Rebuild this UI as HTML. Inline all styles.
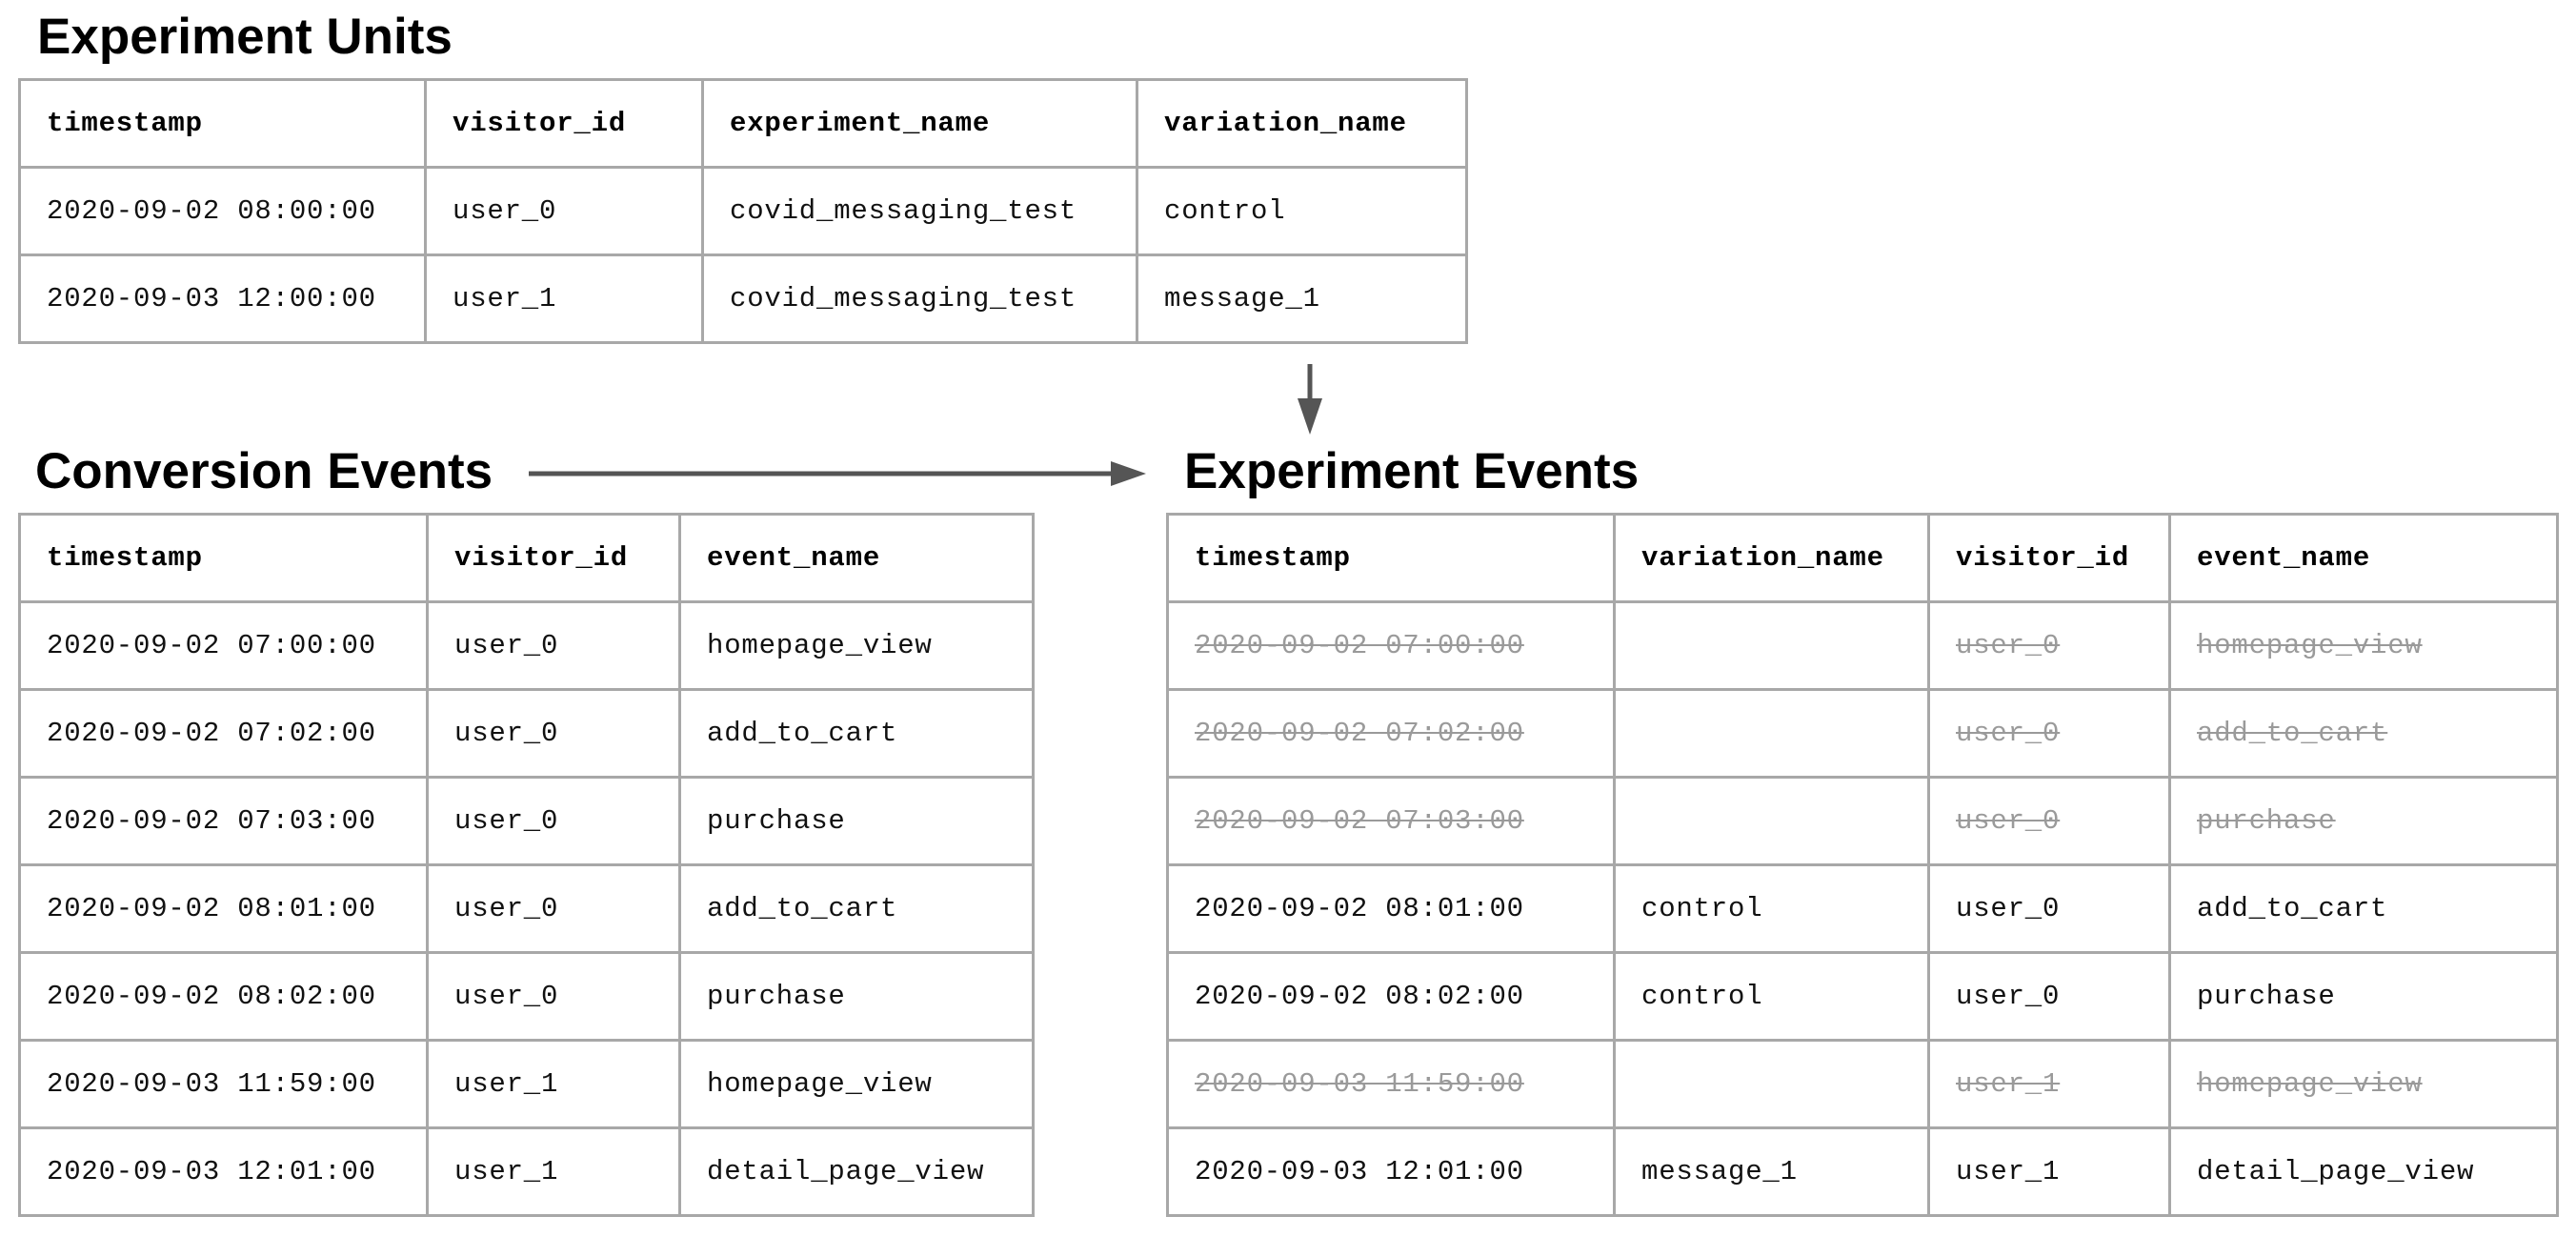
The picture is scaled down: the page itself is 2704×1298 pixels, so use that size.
<!DOCTYPE html>
<html><head><meta charset="utf-8"><style>
body{margin:0;width:2704px;height:1298px;background:#fff;position:relative;overflow:hidden}
.t{position:absolute;font-family:"Liberation Sans",Arial,sans-serif;font-weight:bold;font-size:53px;line-height:53px;color:#000;white-space:nowrap}
table{position:absolute;border-collapse:collapse;table-layout:fixed;font-family:"Liberation Mono",monospace;font-size:29px;letter-spacing:0.8px;color:#111}
td{border:3px solid #a8a8a8;padding:0 0 0 27px;height:89px;white-space:nowrap;overflow:hidden}
th{border:3px solid #a8a8a8;padding:0 0 0 27px;height:89px;text-align:left;font-weight:bold;color:#000}
td.s{color:#9a9a9a;text-decoration:line-through}
</style></head><body>
<div class="t" style="left:39px;top:12px">Experiment Units</div>
<div class="t" style="left:37px;top:468px">Conversion Events</div>
<div class="t" style="left:1243px;top:468px">Experiment Events</div>

<svg style="position:absolute;left:0;top:0" width="2704" height="1298">
<line x1="1375" y1="382" x2="1375" y2="425" stroke="#555" stroke-width="5"/>
<polygon points="1362,418 1388,418 1375,456" fill="#555"/>
<line x1="555" y1="497" x2="1175" y2="497" stroke="#555" stroke-width="5"/>
<polygon points="1166,484 1166,510 1203,497" fill="#555"/>
</svg>

<table style="left:19px;top:82px;width:1519px">
<col style="width:426px"><col style="width:291px"><col style="width:456px"><col style="width:346px">
<tr><th>timestamp</th><th>visitor_id</th><th>experiment_name</th><th>variation_name</th></tr>
<tr><td>2020-09-02 08:00:00</td><td>user_0</td><td>covid_messaging_test</td><td>control</td></tr>
<tr><td>2020-09-03 12:00:00</td><td>user_1</td><td>covid_messaging_test</td><td>message_1</td></tr>
</table>

<table style="left:19px;top:538px;width:1064px">
<col style="width:428px"><col style="width:265px"><col style="width:371px">
<tr><th>timestamp</th><th>visitor_id</th><th>event_name</th></tr>
<tr><td>2020-09-02 07:00:00</td><td>user_0</td><td>homepage_view</td></tr>
<tr><td>2020-09-02 07:02:00</td><td>user_0</td><td>add_to_cart</td></tr>
<tr><td>2020-09-02 07:03:00</td><td>user_0</td><td>purchase</td></tr>
<tr><td>2020-09-02 08:01:00</td><td>user_0</td><td>add_to_cart</td></tr>
<tr><td>2020-09-02 08:02:00</td><td>user_0</td><td>purchase</td></tr>
<tr><td>2020-09-03 11:59:00</td><td>user_1</td><td>homepage_view</td></tr>
<tr><td>2020-09-03 12:01:00</td><td>user_1</td><td>detail_page_view</td></tr>
</table>

<table style="left:1224px;top:538px;width:1459px">
<col style="width:469px"><col style="width:330px"><col style="width:253px"><col style="width:407px">
<tr><th>timestamp</th><th>variation_name</th><th>visitor_id</th><th>event_name</th></tr>
<tr><td class="s">2020-09-02 07:00:00</td><td></td><td class="s">user_0</td><td class="s">homepage_view</td></tr>
<tr><td class="s">2020-09-02 07:02:00</td><td></td><td class="s">user_0</td><td class="s">add_to_cart</td></tr>
<tr><td class="s">2020-09-02 07:03:00</td><td></td><td class="s">user_0</td><td class="s">purchase</td></tr>
<tr><td>2020-09-02 08:01:00</td><td>control</td><td>user_0</td><td>add_to_cart</td></tr>
<tr><td>2020-09-02 08:02:00</td><td>control</td><td>user_0</td><td>purchase</td></tr>
<tr><td class="s">2020-09-03 11:59:00</td><td></td><td class="s">user_1</td><td class="s">homepage_view</td></tr>
<tr><td>2020-09-03 12:01:00</td><td>message_1</td><td>user_1</td><td>detail_page_view</td></tr>
</table>
</body></html>
